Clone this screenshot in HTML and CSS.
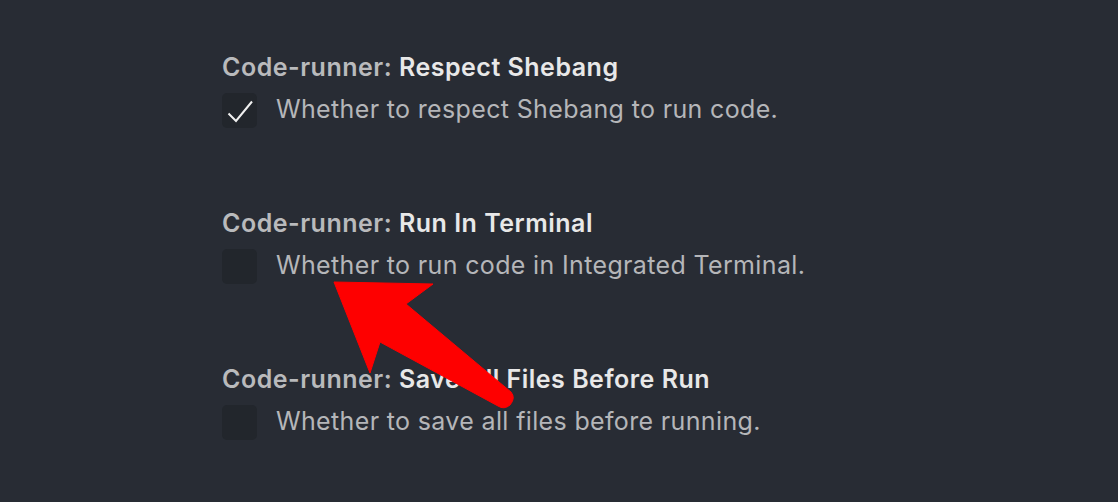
FILE: index.html
```html
<!DOCTYPE html>
<html>
<head>
<meta charset="utf-8">
<link rel="stylesheet" href="styles.css">
</head>
<body>
<div class="settings">
  <div class="setting">
    <div class="title"><span class="cat">Code-runner: </span><span class="name">Respect Shebang</span></div>
    <div class="row">
      <span class="check checked">
        <svg width="35" height="35" viewBox="0 0 35 35"><polyline points="6.5,20.5 14,28 30,8.5" fill="none" stroke="#f0f0f0" stroke-width="2"/></svg>
      </span>
      <span class="desc">Whether to respect Shebang to run code.</span>
    </div>
  </div>
  <div class="setting">
    <div class="title"><span class="cat">Code-runner: </span><span class="name">Run In Terminal</span></div>
    <div class="row">
      <span class="check"></span>
      <span class="desc">Whether to run code in Integrated Terminal.</span>
    </div>
  </div>
  <div class="setting">
    <div class="title"><span class="cat">Code-runner: </span><span class="name">Save All Files Before Run</span></div>
    <div class="row">
      <span class="check"></span>
      <span class="desc">Whether to save all files before running.</span>
    </div>
  </div>
</div>
<svg class="arrow" width="1118" height="502" viewBox="0 0 1118 502">
  <path d="M334,282 L433,284 L406,304 L511,392 Q516,398 510,405 Q504,410 498,406 L380,342 L370,373 Z" fill="#fe0000" stroke="#fe0000" stroke-width="1" stroke-linejoin="round"/>
</svg>
</body>
</html>
```
FILE: styles.css
```css
html, body {
  margin: 0;
  padding: 0;
  background: #282c34;
  width: 1118px;
  height: 502px;
  overflow: hidden;
}
body {
  position: relative;
  font-family: Inter, "Noto Sans", sans-serif;
}
.settings {
  padding: 52px 0 0 222px;
  display: flex;
  flex-direction: column;
  gap: 80px;
}
.setting {
  display: flex;
  flex-direction: column;
  gap: 11px;
}
.title {
  font-size: 25px;
  line-height: 30px;
  font-weight: 600;
  letter-spacing: 0.5px;
  white-space: nowrap;
}
.cat {
  color: #b9babc;
}
.name {
  color: #e8e8e8;
}
.row {
  display: flex;
  align-items: center;
  gap: 19px;
  height: 35px;
}
.check {
  width: 35px;
  height: 35px;
  border-radius: 5px;
  background: #22262c;
  flex: none;
  display: block;
}
.check svg {
  display: block;
}
.desc {
  font-size: 25px;
  letter-spacing: 0.35px;
  color: #b5b6b9;
  white-space: nowrap;
  margin-top: -3px;
}
.arrow {
  position: absolute;
  left: 0;
  top: 0;
}
```
